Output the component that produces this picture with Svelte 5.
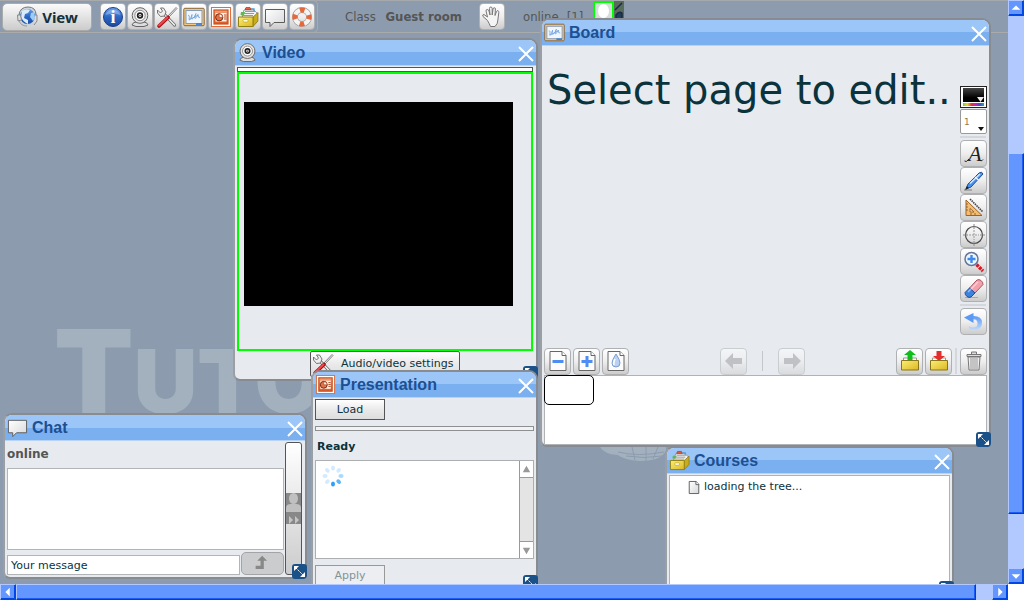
<script>
  let message = $state('Your message');
  let log = $state('');

  const apps = [
    ['info', 'Info'],
    ['camera', 'Video'],
    ['tools', 'Settings'],
    ['board', 'Board'],
    ['slides', 'Presentation'],
    ['files', 'Courses'],
    ['chat', 'Chat'],
    ['help', 'Help']
  ];
  const drawing = [
    ['text', 'Text'],
    ['pen', 'Pen'],
    ['shapes', 'Shapes'],
    ['target', 'Pointer'],
    ['zoom', 'Zoom'],
    ['eraser', 'Eraser']
  ];
  const dots = [
    ['#d4ebff', 0], ['#d4ebff', 45], ['#a9dafe', 90], ['#5cb8fb', 135],
    ['#2f9ff8', 180], ['#d4ebff', 225], ['#d4ebff', 270], ['#d4ebff', 315]
  ];
</script>

{#snippet icon(name)}
  <svg class="icon" viewBox="0 0 22 22" aria-hidden="true">
    {#if name === 'info'}
      <circle cx="11" cy="11" r="9.5" fill="url(#g-blue)" stroke="#1b3f86" />
      <path d="M3.5 9a8 8 0 0 1 15 0q-7-3-15 0z" fill="#a9c9f6" opacity=".5" />
      <text x="11" y="17" text-anchor="middle" class="info-letter">i</text>
    {:else if name === 'camera'}
      <path d="M3 19q1-3 4-3h8q3 0 4 3l-4 1.500H7z" fill="#ddd" stroke="#666" />
      <circle cx="11" cy="9.500" r="7.800" fill="#e4e4e4" stroke="#666" />
      <circle cx="11" cy="9.500" r="5.200" fill="#fff" stroke="#888" />
      <circle cx="11" cy="9.500" r="3.200" fill="#222" />
      <circle cx="11" cy="9.500" r="1.400" fill="#fff" />
      <circle cx="11" cy="9.500" r=".7" fill="#111" />
    {:else if name === 'tools'}
      <path d="M8 8l10.500 11" stroke="#666" stroke-width="3.200" stroke-linecap="round" />
      <path d="M7 7l11.500 12" stroke="#f2f2f2" stroke-width="1.600" stroke-linecap="round" />
      <path d="M1.500 4v3l3 3.500 4-.500 1.500-4-2.500-4H4.500l2 3-2 2z" fill="#eee" stroke="#666" stroke-width=".9" />
      <path d="M20 1.500l1 1-8.500 9-1-1z" fill="#eee" stroke="#666" stroke-width=".8" />
      <path d="M12 11.500L3 20" stroke="#a80f16" stroke-width="3.600" stroke-linecap="round" />
      <path d="M11.500 11.500L3 19.500" stroke="#f0484d" stroke-width="1.800" stroke-linecap="round" />
    {:else if name === 'board'}
      <rect x=".8" y="2.300" width="20.400" height="17.400" rx="1" fill="#f4c883" stroke="#8b6534" />
      <rect x="3" y="4.500" width="16" height="13" fill="#f0f6fc" stroke="#849bb7" />
      <path d="M5 9.500q2-1 1 4 2 0 3-5-1 6 1 4 2-2 3-5-2 4-1 5 2-1 3-4 0 4 2 3M6 14l9-5" fill="none" stroke="#74a5de" stroke-width=".9" />
      <path d="M13 18h6" stroke="#3984dd" stroke-width="1.800" />
    {:else if name === 'slides'}
      <rect x="1.500" y="1.500" width="19" height="19" fill="#fff" stroke="#d9703d" />
      <rect x="4" y="4" width="14" height="14" fill="url(#g-orange)" stroke="#c8501f" stroke-width="1.200" />
      <rect x="5.500" y="7" width="11" height="8.500" fill="#fff0e5" />
      <circle cx="9.200" cy="11.300" r="3.600" fill="#e57246" stroke="#73270e" />
      <path d="M9.200 11.300V8a3.500 3.500 0 0 1 3.500 3.300z" fill="#fff" stroke="#a3401e" stroke-width=".6" />
      <path d="M14 9h2.500m-2.500 2h2.500m-2.500 2h2.500" stroke="#b34c20" />
    {:else if name === 'files'}
      <path d="M5 10l2-6h10l3 3v9l-5 4z" fill="#f3f3f3" stroke="#888" stroke-width=".8" />
      <path d="M8 3.500l1-2h4l1 2z" fill="#e95d40" stroke="#a53420" stroke-width=".7" />
      <path d="M4 6h4l-1 3H3.500z" fill="#5fb852" />
      <path d="M14 3h3v2" stroke="#4d9bd1" stroke-width="1.300" fill="none" />
      <path d="M8 5.500h10M6.500 7.500h10.500M5 9.500h11" stroke="#999" />
      <path d="M16 11l5-4.500v8.500l-5 5.500z" fill="#c9ac1c" stroke="#857310" stroke-width=".7" />
      <path d="M1.500 11H16v9.500H1.500z" fill="url(#g-yellow)" stroke="#93800f" />
      <rect x="6" y="13.500" width="5" height="2.500" rx="1" fill="#fffbe1" stroke="#a59124" stroke-width=".5" />
    {:else if name === 'chat'}
      <path d="M1.500 3.500h19v13H10L6 20.500v-4H1.500z" fill="url(#g-paper)" stroke="#5c5c5c" stroke-linejoin="round" />
    {:else if name === 'help'}
      <circle cx="11" cy="11" r="7" fill="none" stroke="#9a9a9a" stroke-width="5.800" />
      <circle cx="11" cy="11" r="7" fill="none" stroke="#f4f4f4" stroke-width="4.400" />
      <circle cx="11" cy="11" r="7" fill="none" stroke="#e5683d" stroke-width="5.200" stroke-dasharray="4.600 6.400" stroke-dashoffset="2.300" />
    {:else if name === 'hand'}
      <path d="M6.500 14.500L2 10.500q-1-2 1-2l3.500 2.500L5 5q0-1.500 1.300-1.500T8 5l1 4-.5-6.500Q8.500 1 9.800 1t1.400 1.500V9l.8-6q.2-1.300 1.400-1.200T14.400 3L14 9.500l1.500-4q.5-1.200 1.500-.800T17.800 6.500L17 13q0 5-3 7.500H9.500Q8.500 18 6.500 14.500z" fill="#f4f4f4" stroke="#777" />
    {:else if name === 'text'}
      <text x="12" y="18" text-anchor="middle" class="script-letter">A</text>
      <path d="M6 16q-3 4-4.500 2M17 17.500q2 1 3-1" fill="none" stroke="#222" />
    {:else if name === 'pen'}
      <path d="M1 20h8" stroke="#999" stroke-width="1.500" />
      <path d="M3 19l2-5L16 3q3-2 4 1L8 17z" fill="#4b91e9" stroke="#1d4f9d" />
      <path d="M7 13.500L17 4" stroke="#d7e9ff" stroke-width="1.500" />
      <path d="M12 7l4 3.500" stroke="#eef5ff" stroke-width="1.300" />
      <path d="M2 20l2-4 2 2z" fill="#222" />
    {:else if name === 'shapes'}
      <path d="M3 3v15.500h16z" fill="#f4bc72" stroke="#9b6424" />
      <path d="M7 11.500V15h4z" fill="#eee" stroke="#9b6424" />
      <path d="M3 7h2m-2 3h2m-2 3h2M8 18v-2m4 2v-2" stroke="#81501b" stroke-width=".8" />
      <path d="M7 2l13 13" stroke="#444" stroke-width="1.600" stroke-dasharray="1.500 .8" />
    {:else if name === 'target'}
      <circle cx="11" cy="11" r="8.500" fill="none" stroke="#444" stroke-width="1.200" />
      <path d="M11 0v5m0 12v5M0 11h5m12 0h5" stroke="#888" />
      <path d="M11 6v10M6 11h10" stroke="#999" stroke-dasharray="2 1" />
    {:else if name === 'zoom'}
      <path d="M13.500 13.500l6.500 6.500" stroke="#dc1723" stroke-width="3.400" stroke-dasharray="3 .8" />
      <circle cx="8.500" cy="8" r="6.500" fill="#eef6ff" stroke="#64779a" stroke-width="1.500" />
      <path d="M8.500 4v8m-4-4h8" stroke="#3f8ae9" stroke-width="2.400" />
    {:else if name === 'eraser'}
      <path d="M2 19.500h13" stroke="#aaa" />
      <path d="M12 4l2-2q2-1 4 .500t2 4L12 15 6.500 10z" fill="#f3a0ac" stroke="#a85762" />
      <path d="M6.500 10L12 15l-4 4q-2 1-4-.500t-2-4z" fill="#3c83e0" stroke="#234e98" />
      <path d="M5 14l10-10" stroke="#fff" stroke-width="1.400" opacity=".5" />
    {:else if name === 'undo'}
      <path d="M9 8.500q5-1 5.500 3.500T10 16.500q-3 0-4-1.500 0 5 5 4.500 8-1 8-8T9 5z" fill="url(#g-undo)" />
      <path d="M1 6.500L10.500 2v10z" fill="#5b99f5" />
    {:else if name === 'minus' || name === 'plus' || name === 'drop'}
      <path d="M3 1.500h12l4 4v15H3z" fill="#fcfcfc" stroke="#666" />
      <path d="M15 1.500v4h4" fill="#fff" stroke="#666" />
      {#if name === 'drop'}
        <path d="M11 4q4 6 4 9a4 4 0 0 1-8 0q0-3 4-9z" fill="#bcd2f2" stroke="#7c9fd0" />
        <path d="M10 9q-2 4-1 6" fill="none" stroke="#fff" stroke-width="1.600" />
      {:else}
        <path d="M5.500 11.500h11" stroke="#4e8df2" stroke-width="3" />
        {#if name === 'plus'}<path d="M11 6v11" stroke="#4e8df2" stroke-width="3" />{/if}
      {/if}
    {:else if name === 'prev'}
      <path d="M2 11l8-8v5h9v6h-9v5z" fill="#999" />
    {:else if name === 'next'}
      <path d="M20 11l-8-8v5H3v6h9v5z" fill="#999" />
    {:else if name === 'upload' || name === 'download'}
      <path d="M4.500 12V8h13v4" fill="#fff" stroke="#999" />
      {#if name === 'upload'}
        <path d="M11 0l6 5h-3.500v5h-5V5H5z" fill="#10bd19" />
      {:else}
        <path d="M11 11l6-5h-3.500V1h-5v5H5z" fill="#e62d2d" />
      {/if}
      <path d="M2.500 10.500h17v9.500h-17z" fill="url(#g-yellow)" stroke="#87761a" />
    {:else if name === 'trash'}
      <path d="M8.500 4V2h5v2M4 4.500h14v2H4z" fill="#ddd" stroke="#777" />
      <path d="M5 7h12l-1 13H6z" fill="#eee" stroke="#777" />
      <path d="M8 8v11m2-11v11m2-11v11m2-11v11" stroke="#999" />
    {:else if name === 'globe'}
      <circle cx="11.500" cy="10.500" r="8.500" fill="url(#g-blue)" stroke="#c9d3dc" stroke-width="2" />
      <path d="M6 5q4-3 8-1l-2 3-3 1-1 4 4 2v4q-5-2-7-7z" fill="#d8ebfb" />
      <path d="M15 7l3-1 1 6-2 3-3-4z" fill="#9ccbf3" />
      <path d="M3 9Q4 1 12 1t8 8" stroke="#777" fill="none" />
      <path d="M1.500 9l3 0 1 5-3.500 1zM19 9h2v6l-3 4" fill="#ddd" stroke="#888" />
      <path d="M3 15q2 5 8 5" stroke="#999" fill="none" />
    {:else if name === 'send'}
      <path d="M2 17h10V7h4l-6-6-6 6h4v6H2z" fill="#888" />
    {:else if name === 'page'}
      <path d="M3.500 1.500h11l4 4.500v14.500h-15z" fill="url(#g-paper)" stroke="#555" stroke-width="1.400" />
      <path d="M14 1.500v5h5" fill="#fff" stroke="#555" stroke-width="1.400" />
    {/if}
  </svg>
{/snippet}

{#snippet win(cls, name, title, body)}
  <section class="window {cls}" aria-label={title}>
    <header class="titlebar">
      {@render icon(name)}
      <h2>{title}</h2>
      <button class="close" aria-label="Close {title}">
        <svg viewBox="0 0 16 16"><path d="M1 1l14 14M15 1L1 15" stroke="#fff" stroke-width="2" /></svg>
      </button>
    </header>
    {@render body()}
    <button class="grip" aria-label="Resize {title}">
      <svg viewBox="0 0 15 15"><path d="M4 4l7 7" stroke="#fff" stroke-dasharray="2 1" /><path d="M2 2h5L2 7zM13 13H8l5-5z" fill="#fff" /></svg>
    </button>
  </section>
{/snippet}

{#snippet tool(name, label, disabled = false)}
  <button class="tool" aria-label={label} {disabled}>{@render icon(name)}</button>
{/snippet}

{#snippet videoBody()}
  <div class="body video-body">
    <div class="rule dark"></div>
    <div class="feed"><div class="screen"></div></div>
    <button class="push settings">{@render icon('tools')}<span>Audio/video settings</span></button>
  </div>
{/snippet}

{#snippet boardBody()}
  <div class="body board-body">
    <div class="workspace">
      <p class="hint">Select page to edit..</p>
      <div class="palette">
        <button class="swatch" aria-label="Colour"><span class="ink"></span><span class="hues"></span></button>
        <label class="thickness"><select aria-label="Line width"><option>1</option></select></label>
        <hr />
        {#each drawing as [name, label]}{@render tool(name, label)}{/each}
        <hr />
        {@render tool('undo', 'Undo')}
      </div>
    </div>
    <div class="pagebar">
      <div class="cluster">
        {@render tool('minus', 'Remove page')}
        {@render tool('plus', 'Add page')}
        {@render tool('drop', 'Clear page')}
      </div>
      <div class="cluster nav">
        {@render tool('prev', 'Previous page', true)}
        <span class="tick"></span>
        {@render tool('next', 'Next page', true)}
      </div>
      <div class="cluster">
        {@render tool('upload', 'Upload')}
        {@render tool('download', 'Download')}
        <span class="bar"></span>
        {@render tool('trash', 'Delete')}
      </div>
    </div>
    <div class="pages"><button class="thumb" aria-label="Page"></button></div>
  </div>
{/snippet}

{#snippet presentationBody()}
  <div class="body presentation-body">
    <button class="push">Load</button>
    <div class="rule"></div>
    <strong class="status">Ready</strong>
    <div class="preview">
      <svg class="spinner" viewBox="-11 -11 22 22" aria-hidden="true">
        {#each dots as [fill, turn]}
          <ellipse cy="-8" rx="2" ry="2.600" {fill} transform="rotate({turn})" />
        {/each}
      </svg>
      <div class="scroller">
        <button aria-label="Scroll up"><svg viewBox="0 0 14 16"><path d="M7 4l4 7H3z" fill="#999" /></svg></button>
        <button aria-label="Scroll down"><svg viewBox="0 0 14 16"><path d="M7 12l4-7H3z" fill="#999" /></svg></button>
      </div>
    </div>
    <button class="push" disabled>Apply</button>
  </div>
{/snippet}

{#snippet chatBody()}
  <div class="body chat-body">
    <div class="talk">
      <strong class="who">online</strong>
      <textarea aria-label="Conversation" readonly bind:value={log}></textarea>
      <form class="compose" onsubmit={(e) => e.preventDefault()}>
        <input type="text" aria-label="Message" bind:value={message} />
        <button class="send" aria-label="Send">{@render icon('send')}</button>
      </form>
    </div>
    <button class="people" aria-label="Show people">
      <svg viewBox="0 0 15 31">
        <path d="M0 0h15v31H0z" fill="#888" />
        <ellipse cx="7.500" cy="5.500" rx="4.500" ry="5.500" fill="#c0c0c0" />
        <path d="M0 19v-4q0-4 5-4h5q5 0 5 4v4z" fill="#c0c0c0" />
        <path d="M3 23l4 4-4 4zM9 23l4 4-4 4z" fill="#c4c4c4" />
      </svg>
    </button>
  </div>
{/snippet}

{#snippet coursesBody()}
  <div class="body courses-body">
    <ul class="tree">
      <li>{@render icon('page')}<span>loading the tree...</span></li>
    </ul>
  </div>
{/snippet}

{#snippet arrow(d, label)}
  <button class="step" aria-label={label}><svg viewBox="0 0 16 16"><path {d} fill="#fff" /></svg></button>
{/snippet}

<svg class="defs" aria-hidden="true">
  <defs>
    <linearGradient id="g-blue" x2="0" y2="1"><stop stop-color="#6ea4ea" /><stop offset=".5" stop-color="#2a66c4" /><stop offset="1" stop-color="#1d4a9d" /></linearGradient>
    <linearGradient id="g-orange" x2="0" y2="1"><stop stop-color="#f3a177" /><stop offset="1" stop-color="#dc5a25" /></linearGradient>
    <linearGradient id="g-yellow" x2="1" y2="1"><stop stop-color="#fbee75" /><stop offset="1" stop-color="#dcb723" /></linearGradient>
    <linearGradient id="g-paper" x2="1" y2="1"><stop stop-color="#fff" /><stop offset="1" stop-color="#d6d8da" /></linearGradient>
    <linearGradient id="g-undo" x2="0" y2="1"><stop stop-color="#5b99f5" /><stop offset="1" stop-color="#c6dcfb" /></linearGradient>
  </defs>
</svg>

<div class="page">
  <main class="desktop">
    <div class="watermark" aria-hidden="true">T<span>UTO</span></div>
    <svg class="sphere" viewBox="0 0 66 18" aria-hidden="true">
      <path d="M0 0h66v3Q62 14 40 14 24 13 18 8 4 7 0 0z" fill="#a3b1bf" />
      <path d="M18 5q20 5 46 0M26 9q18 3 36 0M32 0l3 13M46 0v14M58 0l-5 12" stroke="#8c9cae" fill="none" />
    </svg>
    <nav class="topbar">
      <div class="launch">
        <button class="view">{@render icon('globe')}View</button>
        <div class="apps">
          {#each apps as [name, label]}{@render tool(name, label)}{/each}
        </div>
      </div>
      <p class="room">Class <b>Guest room</b></p>
      {@render tool('hand', 'Raise hand')}
      <p class="count"><span>online</span><span>[1]</span></p>
      <svg class="avatar" viewBox="0 0 31 32" aria-hidden="true">
        <path d="M20 0h11v32H20z" fill="#596b5c" />
        <path d="M22 9l7-7M23 14q3-4 6-2v8h-6z" stroke="#172b45" stroke-width="1.500" fill="#243d58" />
        <rect x="1" y="1" width="19" height="28" fill="#d5dcda" stroke="#0f0" stroke-width="2" />
        <ellipse cx="10.500" cy="10" rx="5.500" ry="7" fill="#fff" />
      </svg>
    </nav>

    {@render win('video', 'camera', 'Video', videoBody)}
    {@render win('board', 'board', 'Board', boardBody)}
    {@render win('chatroom', 'chat', 'Chat', chatBody)}
    {@render win('presentation', 'slides', 'Presentation', presentationBody)}
    {@render win('courses', 'files', 'Courses', coursesBody)}
  </main>

  <div class="scroll vertical">
    {@render arrow('M8 5l5 5H3z', 'Scroll page up')}
    <div class="track"><span class="before"></span><span class="handle"></span><span class="after"></span></div>
    {@render arrow('M8 11l5-5H3z', 'Scroll page down')}
  </div>
  <div class="scroll horizontal">
    {@render arrow('M5 8l5-5v10z', 'Scroll page left')}
    <div class="track"><span class="handle"></span><span class="after"></span></div>
    {@render arrow('M11 8l-5-5v10z', 'Scroll page right')}
  </div>
</div>

<style>
  :global(body) { margin: 0; background: #fff; }
  .page {
    display: grid;
    grid-template: minmax(0, 1fr) 16px / minmax(0, 1fr) 16px;
    height: 100vh;
    font: 11px/16px "DejaVu Sans", Verdana, sans-serif;
    color: #0b333c;
  }
  .page *, .page { box-sizing: border-box; }
  .defs { position: absolute; width: 0; height: 0; }
  button, input, select, textarea { font: inherit; color: inherit; margin: 0; padding: 0; }
  svg { display: block; }
  h2, p, ul { margin: 0; padding: 0; }
  .icon { width: 22px; height: 22px; flex: none; overflow: visible; }
  .info-letter { font: bold 18px "Liberation Serif", serif; fill: #fff; }
  .script-letter { font: italic 22px "Liberation Serif", serif; fill: #222; }

  .desktop { position: relative; overflow: hidden; background: #8c9cae; }
  .watermark {
    position: absolute; left: 54px; top: 315px;
    font: 900 116px/112px Inter, sans-serif; color: #a3b1bf;
  }
  .watermark span { font-size: 88px; line-height: 88px; }
  .sphere { position: absolute; left: 600px; top: 447px; width: 66px; }

  .topbar {
    display: flex; align-items: center; height: 33px;
    border-top: 1px solid #a5a9ac; border-bottom: 1px solid #a9aaab;
    color: #555; font: 13px/16px "DejaVu Sans Condensed", "DejaVu Sans", sans-serif;
  }
  .launch {
    display: flex; align-items: center; gap: 8px; height: 33px; padding: 0 2px;
    border: 1px solid #a9aaab; border-left: 0; border-radius: 0 5px 5px 0;
  }
  .view {
    display: flex; align-items: center; justify-content: center; gap: 4px;
    width: 90px; height: 28px; border: 1px solid #aaa; border-radius: 5px;
    background: linear-gradient(#fafafa, #ccc); color: #16303a;
    font: bold 15px/20px "Noto Sans", sans-serif;
  }
  .apps { display: flex; gap: 1px; }
  .tool {
    display: grid; place-items: center; flex: none; width: 26px; height: 27px;
    border: 1px solid #aeb0b2; border-radius: 4px; background: linear-gradient(#fff, #eee 50%, #ccc);
  }
  .tool:disabled { opacity: .5; }
  .room { margin: 0 17px 0 27px; white-space: pre; }
  .room b { margin-left: 7px; margin-left: 6px; }
  .count { display: flex; gap: 8px; margin-left: 18px; width: 70px; }
  .avatar { width: 31px; height: 32px; align-self: start; }

  .window {
    position: absolute; display: flex; flex-direction: column;
    border: 2px solid #888b90; border-left-color: #9b9ea2; border-radius: 9px 9px 7px 7px;
    background: #e7ebf0;
  }
  .video { left: 233px; top: 38px; width: 305px; height: 343px; }
  .board { left: 540px; top: 18px; width: 451px; height: 429px; }
  .chatroom { left: 3px; top: 413px; width: 304px; height: 166px; }
  .presentation { left: 311px; top: 370px; width: 227px; height: 220px; }
  .courses { left: 665px; top: 446px; width: 289px; height: 150px; }
  .titlebar {
    display: flex; align-items: center; gap: 4px; flex: none; height: 26px; padding: 0 2px;
    border-bottom: 1px solid #b8d3f3; border-radius: 7px 7px 0 0;
    background: linear-gradient(#9dc6f8 0 50%, #7aaff0 50%);
  }
  h2 { flex: 1; color: #1c5092; font: bold 16px/20px "Liberation Sans", Arial, sans-serif; }
  .titlebar .icon { width: 21px; height: 21px; }
  .close { width: 16px; height: 16px; border: 0; background: none; align-self: end; margin-bottom: 3px; }
  .grip {
    position: absolute; right: -2px; bottom: -2px; width: 15px; height: 15px;
    border: 0; border-radius: 3px 3px 4px; background: #1b5189;
  }
  .body { flex: 1; min-height: 0; padding: 1px 2px 2px; }

  .rule { height: 5px; border: 1px solid #8d8f91; background: #f1f3f5; }
  .rule.dark { border-color: #555; background: #fff; }
  .video-body { padding-right: 3px; }
  .feed { height: 279px; padding: 28px 0 0 5px; border: 2px solid #0f0; }
  .screen { width: 269px; height: 204px; background: #000; }
  .push {
    display: block; width: 70px; height: 21px; border: 1px solid #555;
    background: linear-gradient(#fff, #eaeaea 50%, #ddd);
  }
  .push:disabled { border-color: #999; color: #82949a; background: #eceef1; }
  .settings {
    display: flex; align-items: center; gap: 7px; width: 150px; height: 26px;
    margin: 0 73px 0 auto; padding-left: 1px; border-radius: 2px;
  }

  .board-body { display: flex; flex-direction: column; padding: 1px 2px 0; }
  .workspace { display: flex; flex: 1; min-height: 0; }
  .hint {
    flex: 1; min-width: 0; white-space: nowrap;
    padding: 18px 0 0 3px; font-size: 40px; line-height: 50px;
  }
  .palette { display: flex; flex-direction: column; width: 27px; padding-top: 39px; }
  .palette .tool { width: 27px; }
  .palette hr { width: 26px; height: 2px; margin: 2px 0; border: 0; background: #d4d8dc; }
  .swatch { width: 27px; height: 22px; margin-bottom: 1px; padding: 1px 2px; border: 1px solid #222; background: #fff; }
  .ink { position: relative; display: block; height: 14px; background: linear-gradient(#444, #000 70%); }
  .ink::after {
    content: ""; position: absolute; right: 0; bottom: 0; width: 7px; height: 5px; background: #eee;
    clip-path: polygon(0 0, 100% 0, 50% 100%);
  }
  .hues { display: block; height: 3px; margin-top: 1px; background: linear-gradient(90deg, #7bc242, #e9d83b, #e3342f, #d11cc0, #3355cf, #2aa6a0); }
  .thickness { position: relative; display: block; width: 27px; height: 25px; }
  .thickness::after {
    content: ""; position: absolute; right: 3px; bottom: 3px; width: 6px; height: 4px; background: #111;
    clip-path: polygon(0 0, 100% 0, 50% 100%);
  }
  select {
    appearance: none; width: 100%; height: 100%; padding: 0 3px; border: 1px solid #999; border-radius: 2px;
    background: #fff; color: #99764b; font-size: 9px;
  }
  .pagebar { display: flex; justify-content: space-between; align-items: center; height: 28px; }
  .cluster { display: flex; align-items: center; gap: 2px; }
  .cluster .tool { width: 27px; }
  .cluster.nav { gap: 15px; }
  .tick { width: 1px; height: 20px; background: #c3c7ca; }
  .bar { width: 2px; height: 26px; margin: 0 1px; background: #d4d8dc; }
  .pages { height: 70px; border: 1px solid #b0b3b6; background: #fff; }
  .thumb { display: block; width: 50px; height: 30px; margin: -1px; border: 1px solid #000; border-radius: 5px; background: #fff; }

  .presentation-body { display: flex; flex-direction: column; }
  .presentation-body .rule { margin: 6px 0 7px; }
  .status { line-height: 17px; padding-left: 2px; }
  .preview { display: flex; justify-content: space-between; height: 99px; margin: 5px 0 6px; border: 1px solid #acaeb0; background: #fff; }
  .spinner { width: 22px; height: 22px; margin: 4px 6px; }
  .scroller { display: flex; flex-direction: column; justify-content: space-between; width: 14px; border-left: 1px solid #999; background: #e4e4e4; }
  .scroller button { height: 17px; border: 0; background: #fff; border-bottom: 1px solid #999; }
  .scroller button + button { border-bottom: 0; border-top: 1px solid #999; }

  .chat-body { display: flex; gap: 1px; }
  .talk { display: flex; flex-direction: column; flex: 1; min-width: 0; }
  .who { height: 26px; color: #555; font: bold 12px/24px "DejaVu Sans", sans-serif; }
  textarea { display: block; flex: 1; min-height: 0; resize: none; border: 1px solid #b2b5b8; background: #fff; }
  .compose { display: flex; align-items: end; gap: 1px; height: 25px; }
  .compose input { flex: 1; min-width: 0; height: 20px; padding: 0 3px; border: 1px solid #b2b5b8; background: #fff; }
  .send { display: grid; place-items: center; width: 43px; height: 23px; border: 1px solid #a2a4a6; border-radius: 5px; background: #cbcccd; }
  .send .icon { width: 20px; height: 18px; }
  .people {
    display: grid; place-items: center; width: 17px; margin-right: 1px; border: 1px solid #555; border-radius: 3px;
    background: linear-gradient(#fff, #ccc);
  }
  .people svg { width: 15px; height: 31px; }

  .courses-body { padding-bottom: 0; }
  .tree { height: 100%; padding: 3px 17px; border: 1px solid #b0b3b6; background: #fff; list-style: none; }
  .tree li { display: flex; align-items: center; gap: 3px; }
  .tree .icon { width: 14px; height: 15px; }

  .scroll { display: flex; background: #b2c9ff; }
  .vertical { flex-direction: column; }
  .track { display: flex; flex: 1; }
  .vertical .track { flex-direction: column; }
  .step, .handle { border: 1px solid #0047e6; border-top-color: #b2c9ff; border-left-color: #b2c9ff; background: #6496ff; }
  .step { width: 16px; height: 16px; flex: none; box-shadow: inset -1px -1px #0047e6; }
  .step svg { width: 14px; height: 14px; }
  .handle { box-shadow: inset -1px -1px #1c5cf4; border-right-color: #203c80; border-bottom-color: #203c80; }
  .vertical .before { flex: 137; }
  .vertical .handle { flex: 361; }
  .vertical .after { flex: 54; }
  .horizontal .handle { flex: 960; }
  .horizontal .after { flex: 16; }
</style>
